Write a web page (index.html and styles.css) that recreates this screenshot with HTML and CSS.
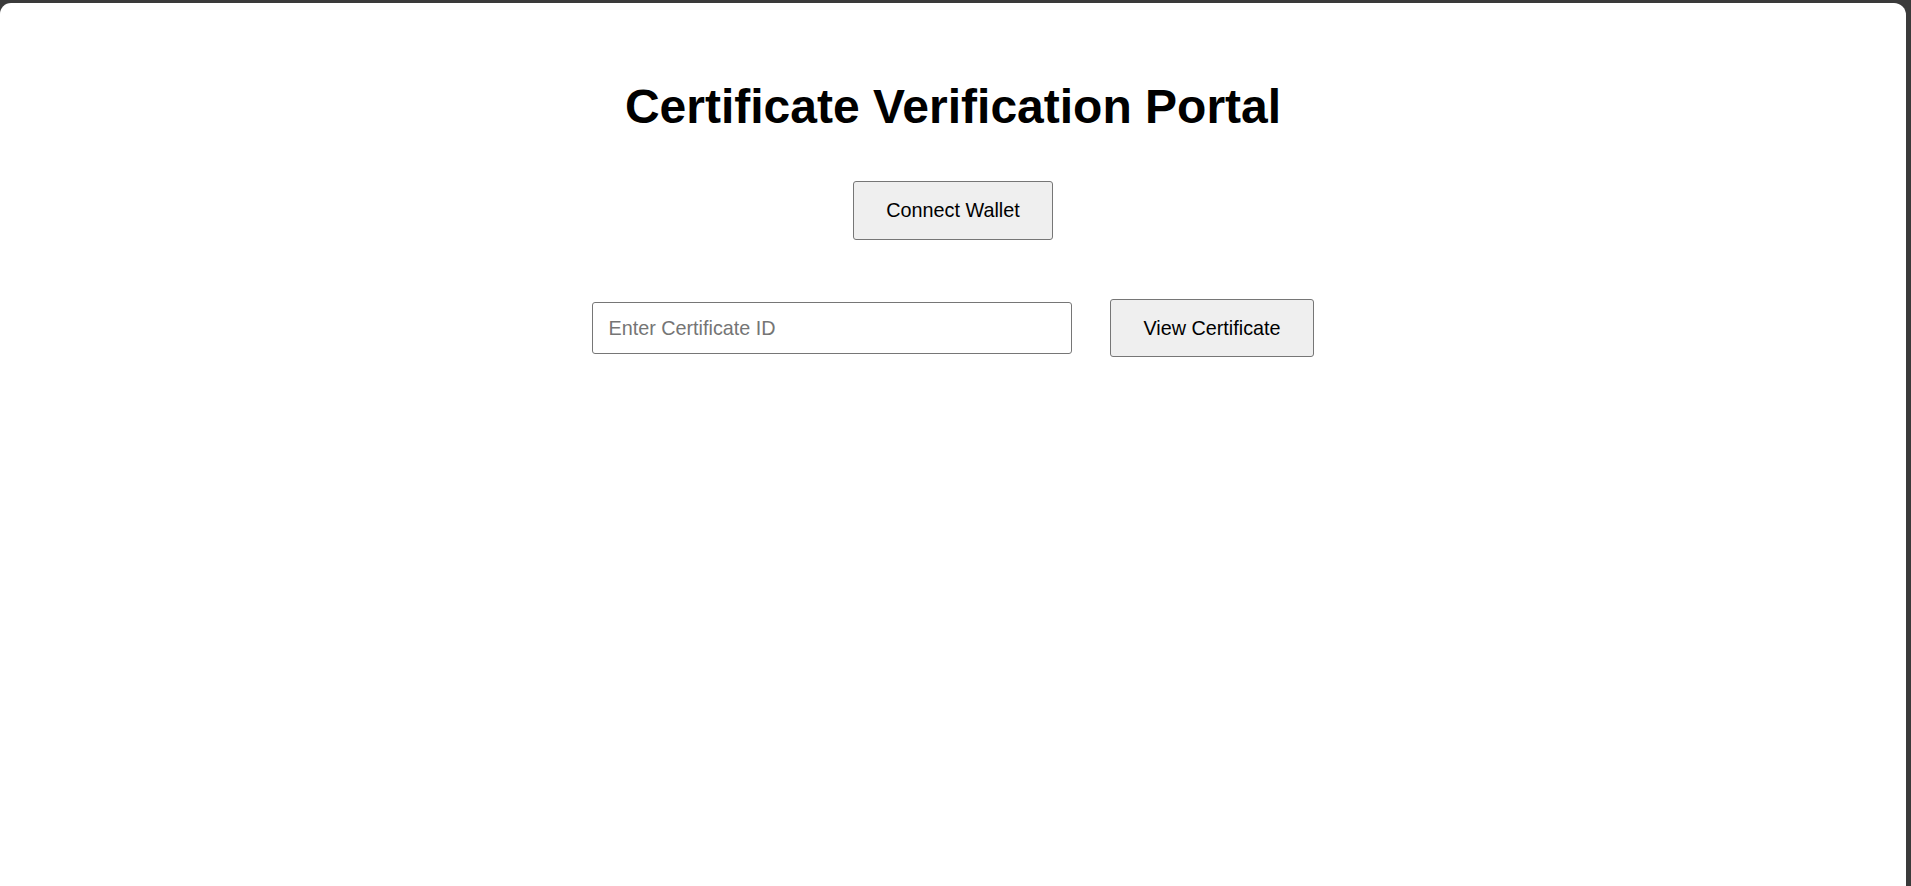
FILE: index.html
```html
<!DOCTYPE html>
<html lang="en">
<head>
<meta charset="utf-8">
<title>Certificate Verification Portal</title>
<link rel="stylesheet" href="styles.css">
</head>
<body>
<div class="frame">
  <main class="portal">
    <h1 class="title">Certificate Verification Portal</h1>
    <button class="btn" type="button">Connect Wallet</button>
    <div class="lookup">
      <input class="field" type="text" placeholder="Enter Certificate ID">
      <button class="btn" type="button">View Certificate</button>
    </div>
  </main>
</div>
</body>
</html>
```

FILE: styles.css
```css
html, body {
  margin: 0;
  padding: 0;
  height: 100%;
}

body {
  background: #3a3a3a;
  font-family: "Liberation Sans", Arial, sans-serif;
  overflow: hidden;
}

.frame {
  box-sizing: border-box;
  height: calc(100% - 3px);
  margin-top: 3px;
  margin-right: 5px;
  background: #ffffff;
  border-radius: 11px 12px 0 0;
}

.portal {
  display: flex;
  flex-direction: column;
  align-items: center;
  padding-top: 76px;
}

.title {
  margin: 0;
  font-size: 48px;
  font-weight: 700;
  color: #000;
  line-height: 55px;
}

.btn {
  margin-top: 47px;
  font-family: "Liberation Sans", Arial, sans-serif;
  font-size: 19.8px;
  line-height: 23px;
  color: #000;
  background: #efefef;
  border: 1px solid #767676;
  border-radius: 3px;
  padding: 17px 32px;
}

.lookup {
  display: flex;
  align-items: center;
  gap: 38px;
  margin-top: 59px;
}

.lookup .btn {
  margin-top: 0;
  padding: 16.5px 32px;
}

.field {
  box-sizing: border-box;
  width: 480px;
  height: 52px;
  padding: 0 15px;
  font-family: "Liberation Sans", Arial, sans-serif;
  font-size: 19.8px;
  color: #000;
  border: 1px solid #767676;
  border-radius: 3px;
  background: #fff;
}

.field::placeholder {
  color: #757575;
}
```
